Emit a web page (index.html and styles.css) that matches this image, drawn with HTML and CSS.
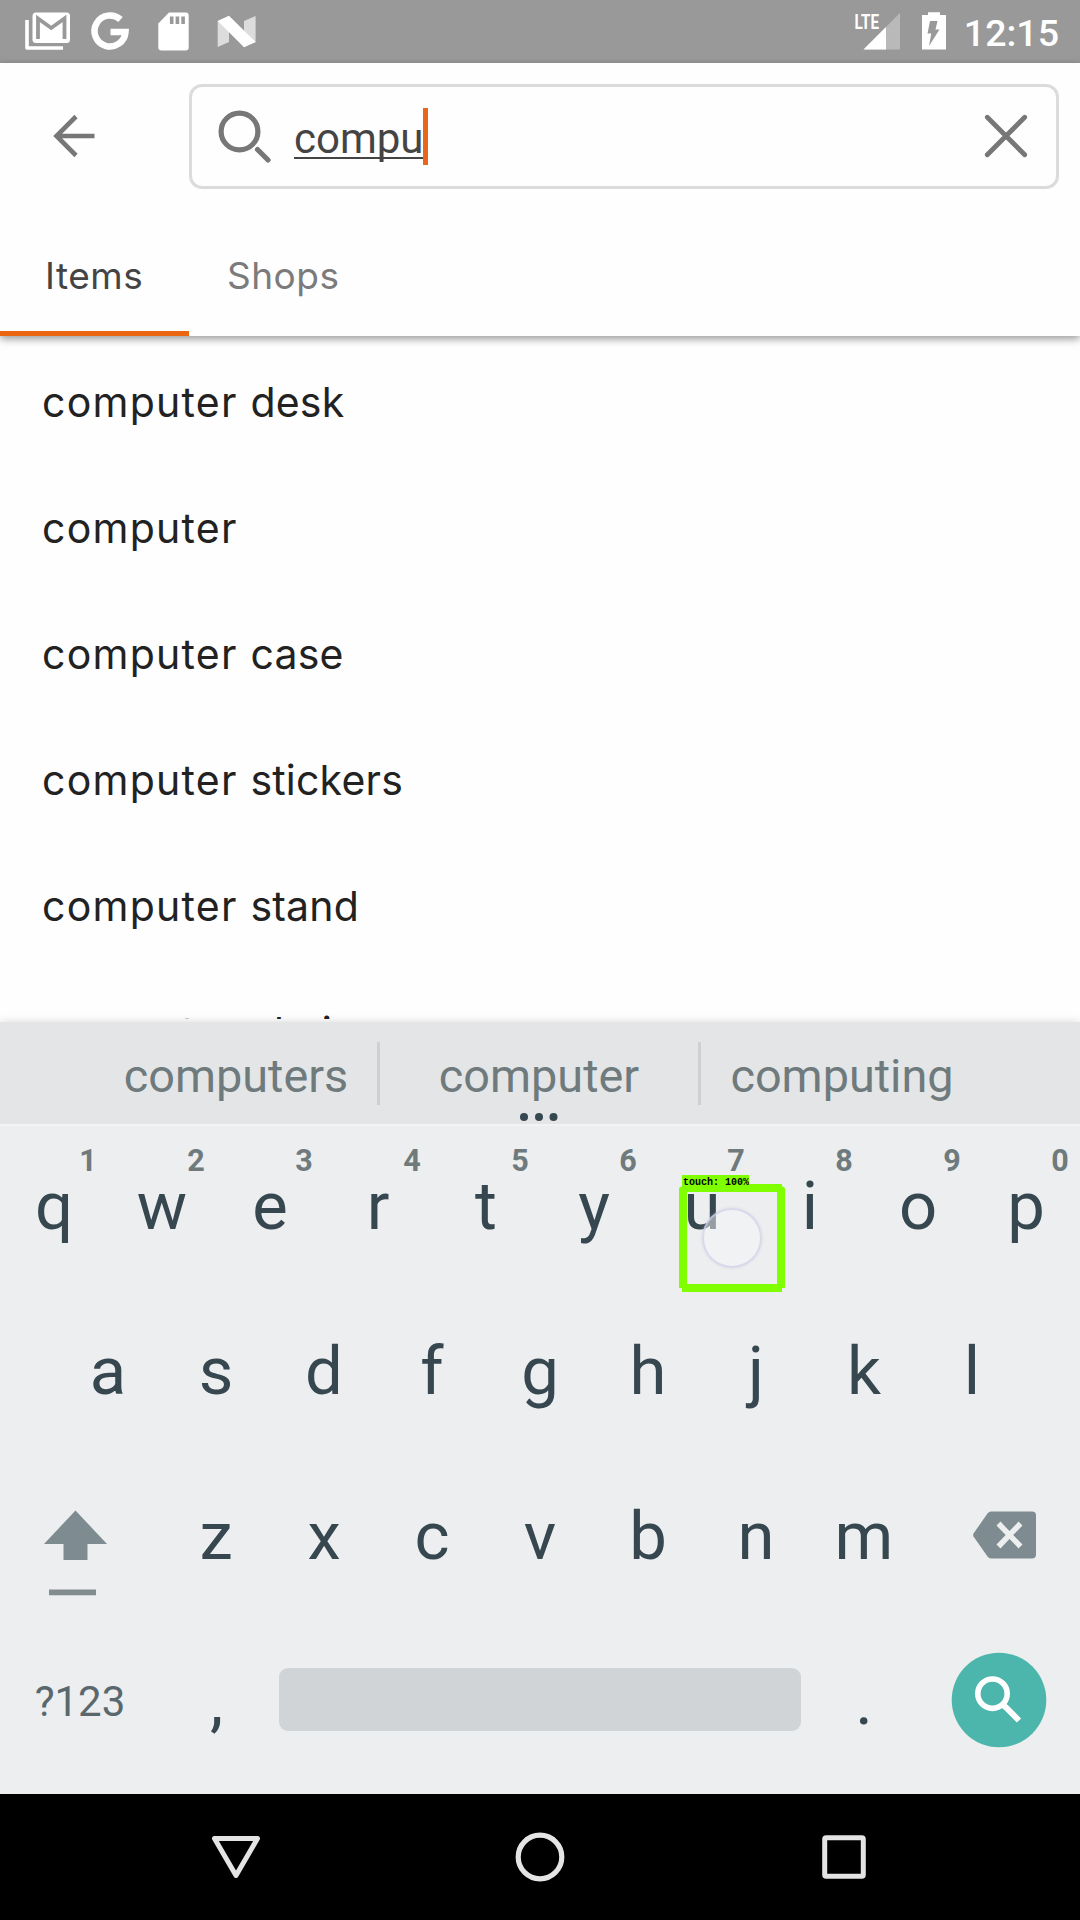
FILE: index.html
```html
<!DOCTYPE html>
<html lang="en">
<head>
<meta charset="utf-8">
<title>Search</title>
<link rel="stylesheet" href="styles.css">
</head>
<body>
<div class="screen">
  <header class="status">
    <svg class="status-left" width="260" height="63" viewBox="0 0 260 63">
      <path d="M27 20V48H63" fill="none" stroke="#fff" stroke-width="3.6" stroke-linejoin="round"/>
      <rect x="32.500" y="12.500" width="37.500" height="30.500" rx="3.500" fill="#fff"/>
      <path d="M38 39V18.500L51.200 28L64.500 18.500V39" fill="none" stroke="#999" stroke-width="3.800"/>
      <path d="M120.500 19.500A15.500 15.500 0 1 0 125.500 32H110.500" fill="none" stroke="#fff" stroke-width="6.500"/>
      <path d="M169 12.500H186Q188.700 12.500 188.700 15.500V47.500Q188.700 50.500 185.500 50.500H161.500Q158.300 50.500 158.300 47.500V23.500Z" fill="#fff"/>
      <path d="M171.700 16.500V24M177.400 16.500V24M183.100 16.500V24" stroke="#999" stroke-width="3.600"/>
      <path d="M217.700 21L229 16V42L217.700 47ZM244 21L255.600 16V42L244 47Z" fill="#dcdcdc"/>
      <path d="M217.700 21L229 15.700L255.600 42L244 47.300Z" fill="#fff"/>
    </svg>
    <svg class="status-right" width="100" height="63" viewBox="850 0 100 63">
      <path d="M863.500 49.500L900 13V49.500Z" fill="#b9b9b9"/>
      <path d="M863.500 49.500L886 27V49.500Z" fill="#fff"/>
      <path d="M853 12H880V27L877 30H853Z" fill="#999"/>
      <text class="lte" x="854.500" y="29.200" textLength="24.500" lengthAdjust="spacingAndGlyphs">LTE</text>
      <path d="M922 15H928V12.300H940V15H946V49.500H922Z" fill="#fff"/>
      <path d="M930 21H937.500L935.500 29.500H939.500L929 46L931.300 33.500H927.500Z" fill="#999"/>
    </svg>
    <span class="clock">12:15</span>
  </header>

  <section class="toolbar">
    <div class="search-row">
      <svg class="back" width="44" height="44" viewBox="0 0 44 44"><path d="M42.500 22H4M24 2.500L4.500 22L24 41.500" fill="none" stroke="#777" stroke-width="4.600"/></svg>
      <div class="search-box">
        <svg class="glass" width="56" height="56" viewBox="0 0 56 56"><circle cx="22.500" cy="22.500" r="18.400" fill="none" stroke="#777" stroke-width="5.200"/><path d="M40.500 40.500L51 51" stroke="#777" stroke-width="5.200" stroke-linecap="round"/></svg>
        <span class="query">compu</span><span class="caret"></span>
        <svg class="clear" width="44" height="44" viewBox="0 0 44 44"><path d="M3.300 3.300L40.700 40.700M40.700 3.300L3.300 40.700" stroke="#777" stroke-width="4.800" stroke-linecap="round"/></svg>
      </div>
    </div>
    <nav class="tabs">
      <span class="tab active">Items</span>
      <span class="tab">Shops</span>
    </nav>
  </section>

  <ul class="results">
    <li>computer <span>desk</span></li>
    <li>computer</li>
    <li>computer <span>case</span></li>
    <li>computer <span>stickers</span></li>
    <li>computer <span>stand</span></li>
    <li>computer <span>chair</span></li>
  </ul>

  <section class="keyboard">
    <div class="suggestions">
      <span>computers</span>
      <span class="middle">computer<svg class="dots" width="40" height="10" viewBox="0 0 40 10"><g fill="#37474f"><circle cx="5" cy="5" r="4"/><circle cx="20" cy="5" r="4"/><circle cx="34.500" cy="5" r="4"/></g></svg></span>
      <span>computing</span>
    </div>
    <div class="keys">
      <div class="row">
        <span class="key">q<sup>1</sup></span><span class="key">w<sup>2</sup></span><span class="key">e<sup>3</sup></span><span class="key">r<sup>4</sup></span><span class="key">t<sup>5</sup></span><span class="key">y<sup>6</sup></span><span class="key">u<sup>7</sup></span><span class="key">i<sup>8</sup></span><span class="key">o<sup>9</sup></span><span class="key">p<sup>0</sup></span>
      </div>
      <div class="row">
        <span class="key">a</span><span class="key">s</span><span class="key">d</span><span class="key">f</span><span class="key">g</span><span class="key">h</span><span class="key">j</span><span class="key">k</span><span class="key">l</span>
      </div>
      <div class="row">
        <span class="key wide"><svg class="shift" width="64" height="88" viewBox="0 0 64 88"><path d="M31.500 1.500L63 35H43.500V51H19.500V35H0Z" fill="#7e8b90"/><path d="M5 80.500H52V86.300H5Z" fill="#828c8f"/></svg></span>
        <span class="key">z</span><span class="key">x</span><span class="key">c</span><span class="key">v</span><span class="key">b</span><span class="key">n</span><span class="key">m</span>
        <span class="key wide"><svg class="backspace" width="64" height="48" viewBox="0 0 64 48"><path d="M18 .500H59Q63 .500 63 4.500V43.500Q63 47.500 59 47.500H18Q16 47.500 14.500 45.500L.500 25.500Q-.200 24 .500 22.500L14.500 2.500Q16 .500 18 .500Z" fill="#7e8b90"/><path d="M25.500 12.500L47.500 35.500M47.500 12.500L25.500 35.500" stroke="#eceeef" stroke-width="5.500"/></svg></span>
      </div>
      <div class="row">
        <span class="key wide symbols">?123</span>
        <span class="key comma">,</span>
        <span class="space"></span>
        <span class="key">.</span>
        <span class="key wide"><svg class="go" width="96" height="98" viewBox="0 0 96 98"><ellipse cx="48" cy="49" rx="47.300" ry="47.300" fill="#4db6ac"/><circle cx="41.500" cy="42.700" r="14.700" fill="none" stroke="#fff" stroke-width="5.600"/><path d="M51.500 53.500L55 56.500L68 69.500" fill="none" stroke="#fff" stroke-width="6"/></svg></span>
      </div>
    </div>
  </section>

  <footer class="navbar">
    <svg width="50" height="50" viewBox="0 0 50 50"><path d="M3.500 6.500H46.500L25 43.500Z" fill="none" stroke="#e4e4e4" stroke-width="5" stroke-linejoin="round"/></svg>
    <svg width="50" height="50" viewBox="0 0 50 50"><circle cx="25" cy="25" r="21.800" fill="none" stroke="#e4e4e4" stroke-width="5.200"/></svg>
    <svg width="50" height="50" viewBox="0 0 50 50"><rect x="5.700" y="5.700" width="38.600" height="38.600" rx="1.500" fill="none" stroke="#e4e4e4" stroke-width="5"/></svg>
  </footer>

  <div class="touch-point"></div>
  <div class="detection"></div>
  <div class="detection-label">touch: 100%</div>
</div>
</body>
</html>
```
FILE: styles.css
```css
* { box-sizing: border-box; }
body { margin: 0; background: #fff; font-family: Roboto, sans-serif; }
svg { display: block; flex: none; }

.screen {
  position: relative;
  display: flex;
  flex-direction: column;
  width: 1080px;
  height: 1920px;
  overflow: hidden;
  background: #fefefe;
}

.status {
  display: flex;
  align-items: center;
  height: 63px;
  background: #999;
  color: #fff;
  flex: none;
}
.status-right { margin-left: auto; }
.lte { font: 700 21px Roboto, sans-serif; fill: #fff; }
.clock {
  width: 130px;
  padding: 2px 21px 0 0;
  text-align: right;
  font-size: 37.500px;
  font-weight: 500;
  line-height: 60px;
}

.toolbar {
  position: relative;
  z-index: 1;
  flex: none;
  height: 273px;
  background: #fefefe;
  box-shadow: 0 3px 8px rgba(0, 0, 0, .4);
}
.search-row {
  display: flex;
  align-items: center;
  height: 147px;
  padding: 0 21px 0 52px;
}
.back { margin-bottom: 1px; }
.search-box {
  display: flex;
  align-items: center;
  width: 870px;
  height: 105px;
  margin-left: 93px;
  padding: 0 28px 0 25px;
  border: 3px solid #dbdbdb;
  border-radius: 13px;
}
.glass { margin-top: 1px; }
.query {
  margin-left: 21px;
  font-size: 42px;
  line-height: 48px;
  color: #444;
  padding-top: 4px;
  text-decoration: underline;
  text-decoration-thickness: 2px;
  text-underline-offset: 4px;
  text-decoration-skip-ink: none;
}
.caret { width: 5px; height: 57px; margin-left: -1px; background: #e9661a; }
.clear { margin: 0 0 1px auto; }

.tabs { display: flex; height: 126px; }
.tab {
  padding: 0 38px;
  font-family: Inter, sans-serif;
  font-size: 37px;
  line-height: 132px;
  letter-spacing: .500px;
  color: #7b7b7b;
}
.tab.active {
  width: 189px;
  padding-left: 45px;
  padding-right: 0;
  color: #444;
  border-bottom: 5px solid #eb6611;
}

.results {
  flex: none;
  height: 683px;
  margin: 0 0 3px;
  padding: 3px 42px 0;
  overflow: hidden;
  list-style: none;
  font-family: Inter, sans-serif;
  font-size: 41px;
  line-height: 126px;
  letter-spacing: 1.250px;
  color: #222;
}
.results span { letter-spacing: .200px; }

.keyboard {
  flex: none;
  height: 772px;
  background: #eceeef;
  box-shadow: 0 -1px 8px rgba(0, 0, 0, .12);
}
.suggestions {
  display: flex;
  align-items: center;
  height: 102px;
  padding: 0 95px;
  background: #e3e5e7;
  font-size: 46.800px;
  color: #6f7a7d;
}
.suggestions span {
  width: 282px;
  height: 63px;
  text-align: center;
  line-height: 69px;
}
.suggestions .middle {
  position: relative;
  width: 324px;
  border: solid #cdd1d4;
  border-width: 0 3px;
}
.dots { position: absolute; left: 139px; top: 70px; }

.keys { box-shadow: inset 0 2px #f2f4f4; }
.row { display: flex; justify-content: center; align-items: center; height: 165px; }
.key {
  position: relative;
  display: flex;
  justify-content: center;
  width: 108px;
  font-size: 67px;
  line-height: 165px;
  color: #37474f;
}
.key sup {
  position: absolute;
  left: 68px;
  top: 17px;
  width: 40px;
  text-align: center;
  font-size: 30.500px;
  font-weight: 700;
  line-height: 40px;
  color: #6f7a7d;
}
.key.wide { width: 162px; }
.key.symbols { font-size: 42px; color: #5a686d; line-height: 162px; padding-right: 2px; }
.key.comma { padding-left: 1px; }
.space { width: 522px; height: 63px; margin: -4px 9px 0; border-radius: 9px; background: #d0d4d7; }
.shift { margin: 32px 10px 0 0; }
.backspace { margin: 0 0 4px 12px; }
.go { margin-top: -3px; }

.navbar {
  display: flex;
  justify-content: space-between;
  align-items: center;
  height: 126px;
  padding: 0 211px;
  background: #000;
  flex: none;
}

.touch-point {
  position: absolute;
  left: 702px;
  top: 1208px;
  width: 60px;
  height: 60px;
  border: 2px solid rgba(205, 205, 232, .65);
  border-radius: 50%;
  background: rgba(245, 246, 248, .5);
  box-shadow: 0 0 3px rgba(190, 190, 215, .4);
}
.detection {
  position: absolute;
  left: 679px;
  top: 1184px;
  width: 106px;
  height: 108px;
  border: 8px solid #80ff00;
  clip-path: polygon(3px 0, 103px 0, 103px 2px, 106px 4px, 106px 104px, 103px 104px, 103px 108px, 3px 108px, 3px 104px, 0 104px, 0 4px, 3px 2px);
}
.detection-label {
  position: absolute;
  left: 682px;
  top: 1175px;
  width: 67px;
  height: 13px;
  padding-left: 1px;
  background: #80ff00;
  color: #000;
  font: 700 10px/15px "Liberation Mono", monospace;
}
```
